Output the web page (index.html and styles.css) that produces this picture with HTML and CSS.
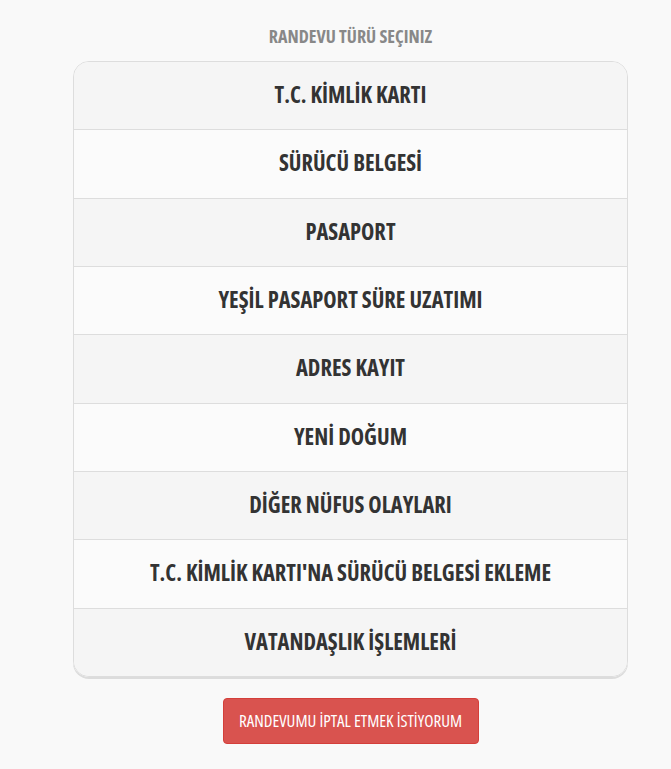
FILE: index.html
```html
<!DOCTYPE html>
<html lang="tr">
<head>
<meta charset="utf-8">
<title>Randevu</title>
<link rel="stylesheet" href="styles.css">
</head>
<body>
<main class="page">
  <h2 class="title">RANDEVU TÜRÜ SEÇINIZ</h2>
  <ul class="list">
    <li class="item">T.C. KİMLİK KARTI</li>
    <li class="item">SÜRÜCÜ BELGESİ</li>
    <li class="item">PASAPORT</li>
    <li class="item">YEŞİL PASAPORT SÜRE UZATIMI</li>
    <li class="item">ADRES KAYIT</li>
    <li class="item">YENİ DOĞUM</li>
    <li class="item">DİĞER NÜFUS OLAYLARI</li>
    <li class="item">T.C. KİMLİK KARTI'NA SÜRÜCÜ BELGESİ EKLEME</li>
    <li class="item">VATANDAŞLIK İŞLEMLERİ</li>
  </ul>
  <button class="cancel" type="button">RANDEVUMU İPTAL ETMEK İSTİYORUM</button>
</main>
</body>
</html>
```

FILE: styles.css
```css
html, body {
  margin: 0;
  padding: 0;
  background: #f9f9f9;
}
body {
  font-family: "Open Sans", "DejaVu Sans Condensed", sans-serif;
  font-stretch: condensed;
}
.page {
  display: flex;
  flex-direction: column;
  align-items: center;
  padding: 25px 0 0 30px;
}
.title {
  margin: 0 0 14px;
  font-size: 18px;
  line-height: 22px;
  font-weight: bold;
  color: #888;
}
.list {
  list-style: none;
  margin: 0;
  padding: 0;
  width: 553px;
  border: 1px solid #ddd;
  border-radius: 16px;
  overflow: hidden;
  box-shadow: 0 2px 0 #dcdcdc;
}
.item {
  height: 65.33px;
  padding-bottom: 2px;
  display: flex;
  align-items: center;
  justify-content: center;
  font-size: 22.5px;
  font-weight: bold;
  color: #333;
  border-bottom: 1px solid #ddd;
  background: #f5f5f5;
}
.item:nth-child(even) {
  background: #fbfbfb;
}
.item:last-child {
  border-bottom: none;
}
.cancel {
  margin-top: 21px;
  width: 256px;
  height: 46px;
  padding: 0 0 1px;
  border: 1px solid #d43f3a;
  border-radius: 4px;
  background: #d9534f;
  color: #fff;
  font-family: inherit;
  font-stretch: condensed;
  font-size: 17px;
}
```
